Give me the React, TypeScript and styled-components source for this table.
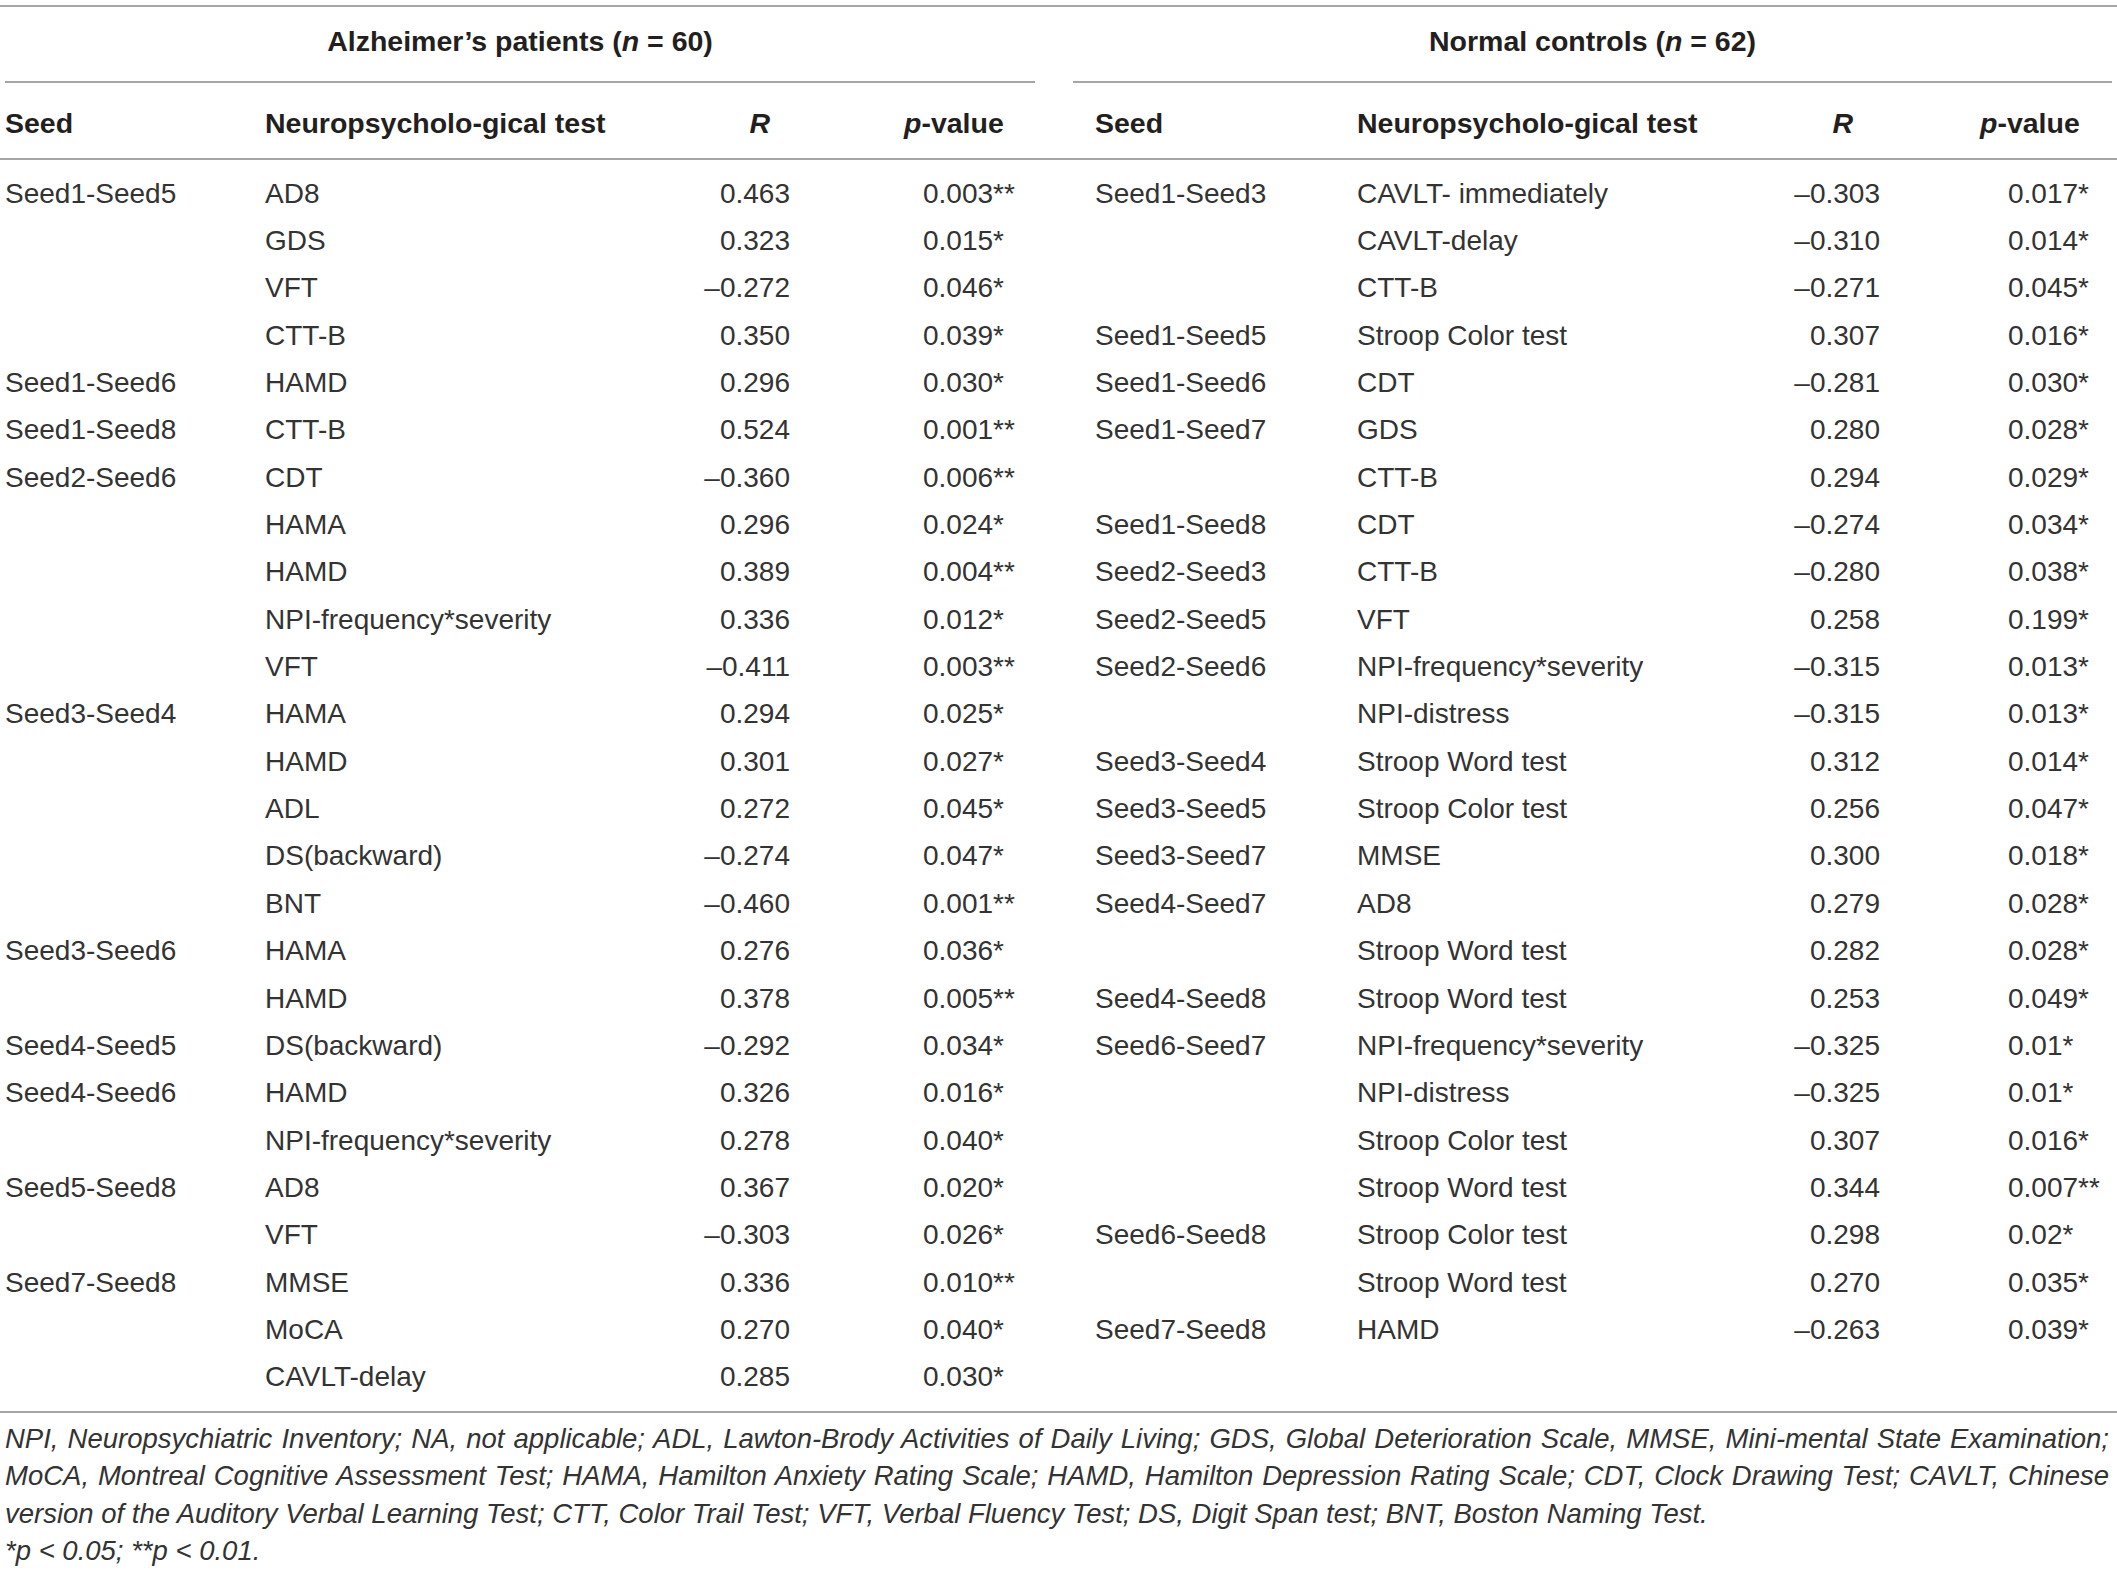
import React from "react";
import styled, { createGlobalStyle } from "styled-components";

const GlobalStyle = createGlobalStyle`
  html, body {
    margin: 0;
    padding: 0;
    background: #ffffff;
  }
  body {
    font-family: "Liberation Sans", Arial, Helvetica, sans-serif;
    color: #333333;
  }
`;

type Side = "left" | "right";

const COLS = "265px 435px 90px 245px 38px 284px 433px 90px 237px";
const RULE = "#a6a6a6";

const Page = styled.div`
  width: 2117px;
  padding-top: 5px;
`;

const TableBox = styled.div`
  border-top: 2px solid ${RULE};
`;

const GroupRow = styled.div`
  display: grid;
  grid-template-columns: ${COLS};
  height: 76px;
`;

const GroupTitle = styled.div<{ $side: Side }>`
  grid-column: ${(p) => (p.$side === "left" ? "1 / span 4" : "6 / span 4")};
  margin-left: ${(p) => (p.$side === "left" ? "5px" : "0")};
  margin-right: ${(p) => (p.$side === "left" ? "0" : "5px")};
  border-bottom: 2px solid ${RULE};
  display: flex;
  align-items: center;
  justify-content: center;
  padding-bottom: 6px;
  box-sizing: border-box;
  font-size: 28.5px;
  font-weight: 700;
  color: #231f20;
`;

const HeaderRow = styled.div`
  display: grid;
  grid-template-columns: ${COLS};
  height: 77px;
  box-sizing: border-box;
  border-bottom: 2px solid ${RULE};
  padding-top: 6px;
  align-items: center;
`;

const HeadCell = styled.div<{ $pl?: number; $pr?: number; $align?: string }>`
  font-size: 28.5px;
  font-weight: 700;
  color: #231f20;
  white-space: nowrap;
  padding-left: ${(p) => p.$pl ?? 0}px;
  padding-right: ${(p) => p.$pr ?? 0}px;
  text-align: ${(p) => p.$align ?? "left"};
`;

const DataGrid = styled.div`
  display: grid;
  grid-template-columns: ${COLS};
  grid-auto-rows: 47.35px;
  padding: 10px 0;
  border-bottom: 2px solid ${RULE};
  align-items: center;
`;

const Cell = styled.div<{ $pl?: number; $align?: string }>`
  font-size: 28px;
  white-space: nowrap;
  color: #333333;
  padding-left: ${(p) => p.$pl ?? 0}px;
  text-align: ${(p) => p.$align ?? "left"};
`;

const Gap = styled.div``;

const Footnote = styled.div`
  margin-top: 7px;
  padding: 0 8px 0 5px;
  font-size: 27.5px;
  font-style: italic;
  line-height: 37.5px;
  color: #333333;
  text-align: justify;
`;

const FootLine = styled.p`
  margin: 0;
`;

type Row = [string, string, string, string];

const leftRows: Row[] = [
  ["Seed1-Seed5", "AD8", "0.463", "0.003**"],
  ["", "GDS", "0.323", "0.015*"],
  ["", "VFT", "–0.272", "0.046*"],
  ["", "CTT-B", "0.350", "0.039*"],
  ["Seed1-Seed6", "HAMD", "0.296", "0.030*"],
  ["Seed1-Seed8", "CTT-B", "0.524", "0.001**"],
  ["Seed2-Seed6", "CDT", "–0.360", "0.006**"],
  ["", "HAMA", "0.296", "0.024*"],
  ["", "HAMD", "0.389", "0.004**"],
  ["", "NPI-frequency*severity", "0.336", "0.012*"],
  ["", "VFT", "–0.411", "0.003**"],
  ["Seed3-Seed4", "HAMA", "0.294", "0.025*"],
  ["", "HAMD", "0.301", "0.027*"],
  ["", "ADL", "0.272", "0.045*"],
  ["", "DS(backward)", "–0.274", "0.047*"],
  ["", "BNT", "–0.460", "0.001**"],
  ["Seed3-Seed6", "HAMA", "0.276", "0.036*"],
  ["", "HAMD", "0.378", "0.005**"],
  ["Seed4-Seed5", "DS(backward)", "–0.292", "0.034*"],
  ["Seed4-Seed6", "HAMD", "0.326", "0.016*"],
  ["", "NPI-frequency*severity", "0.278", "0.040*"],
  ["Seed5-Seed8", "AD8", "0.367", "0.020*"],
  ["", "VFT", "–0.303", "0.026*"],
  ["Seed7-Seed8", "MMSE", "0.336", "0.010**"],
  ["", "MoCA", "0.270", "0.040*"],
  ["", "CAVLT-delay", "0.285", "0.030*"],
];

const rightRows: Row[] = [
  ["Seed1-Seed3", "CAVLT- immediately", "–0.303", "0.017*"],
  ["", "CAVLT-delay", "–0.310", "0.014*"],
  ["", "CTT-B", "–0.271", "0.045*"],
  ["Seed1-Seed5", "Stroop Color test", "0.307", "0.016*"],
  ["Seed1-Seed6", "CDT", "–0.281", "0.030*"],
  ["Seed1-Seed7", "GDS", "0.280", "0.028*"],
  ["", "CTT-B", "0.294", "0.029*"],
  ["Seed1-Seed8", "CDT", "–0.274", "0.034*"],
  ["Seed2-Seed3", "CTT-B", "–0.280", "0.038*"],
  ["Seed2-Seed5", "VFT", "0.258", "0.199*"],
  ["Seed2-Seed6", "NPI-frequency*severity", "–0.315", "0.013*"],
  ["", "NPI-distress", "–0.315", "0.013*"],
  ["Seed3-Seed4", "Stroop Word test", "0.312", "0.014*"],
  ["Seed3-Seed5", "Stroop Color test", "0.256", "0.047*"],
  ["Seed3-Seed7", "MMSE", "0.300", "0.018*"],
  ["Seed4-Seed7", "AD8", "0.279", "0.028*"],
  ["", "Stroop Word test", "0.282", "0.028*"],
  ["Seed4-Seed8", "Stroop Word test", "0.253", "0.049*"],
  ["Seed6-Seed7", "NPI-frequency*severity", "–0.325", "0.01*"],
  ["", "NPI-distress", "–0.325", "0.01*"],
  ["", "Stroop Color test", "0.307", "0.016*"],
  ["", "Stroop Word test", "0.344", "0.007**"],
  ["Seed6-Seed8", "Stroop Color test", "0.298", "0.02*"],
  ["", "Stroop Word test", "0.270", "0.035*"],
  ["Seed7-Seed8", "HAMD", "–0.263", "0.039*"],
];

const sideConfig = {
  left: { seedPl: 5, rHeadPr: 20, pHeadPl: 114, pPl: 133 },
  right: { seedPl: 22, rHeadPr: 27, pHeadPl: 100, pPl: 128 },
};

const HeaderCells: React.FC<{ side: Side }> = ({ side }) => {
  const c = sideConfig[side];
  return (
    <>
      <HeadCell $pl={c.seedPl}>Seed</HeadCell>
      <HeadCell>Neuropsycholo-gical test</HeadCell>
      <HeadCell $align="right" $pr={c.rHeadPr}>
        <i>R</i>
      </HeadCell>
      <HeadCell $pl={c.pHeadPl}>
        <i>p</i>-value
      </HeadCell>
    </>
  );
};

const DataCells: React.FC<{ side: Side; row?: Row }> = ({ side, row }) => {
  const c = sideConfig[side];
  const [seed, test, r, p] = row ?? ["", "", "", ""];
  return (
    <>
      <Cell $pl={c.seedPl}>{seed}</Cell>
      <Cell>{test}</Cell>
      <Cell $align="right">{r}</Cell>
      <Cell $pl={c.pPl}>{p}</Cell>
    </>
  );
};

export default function App() {
  const count = Math.max(leftRows.length, rightRows.length);
  const indices = Array.from({ length: count }, (_, i) => i);
  return (
    <Page>
      <GlobalStyle />
      <TableBox>
        <GroupRow>
          <GroupTitle $side="left">
            <span>
              Alzheimer’s patients (<i>n</i> = 60)
            </span>
          </GroupTitle>
          <GroupTitle $side="right">
            <span>
              Normal controls (<i>n</i> = 62)
            </span>
          </GroupTitle>
        </GroupRow>
        <HeaderRow>
          <HeaderCells side="left" />
          <Gap />
          <HeaderCells side="right" />
        </HeaderRow>
        <DataGrid>
          {indices.map((i) => (
            <React.Fragment key={i}>
              <DataCells side="left" row={leftRows[i]} />
              <Gap />
              <DataCells side="right" row={rightRows[i]} />
            </React.Fragment>
          ))}
        </DataGrid>
      </TableBox>
      <Footnote>
        <FootLine>
          NPI, Neuropsychiatric Inventory; NA, not applicable; ADL, Lawton-Brody Activities of Daily
          Living; GDS, Global Deterioration Scale, MMSE, Mini-mental State Examination; MoCA, Montreal
          Cognitive Assessment Test; HAMA, Hamilton Anxiety Rating Scale; HAMD, Hamilton Depression
          Rating Scale; CDT, Clock Drawing Test; CAVLT, Chinese version of the Auditory Verbal Learning
          Test; CTT, Color Trail Test; VFT, Verbal Fluency Test; DS, Digit Span test; BNT, Boston
          Naming Test.
        </FootLine>
        <FootLine>*p &lt; 0.05; **p &lt; 0.01.</FootLine>
      </Footnote>
    </Page>
  );
}
